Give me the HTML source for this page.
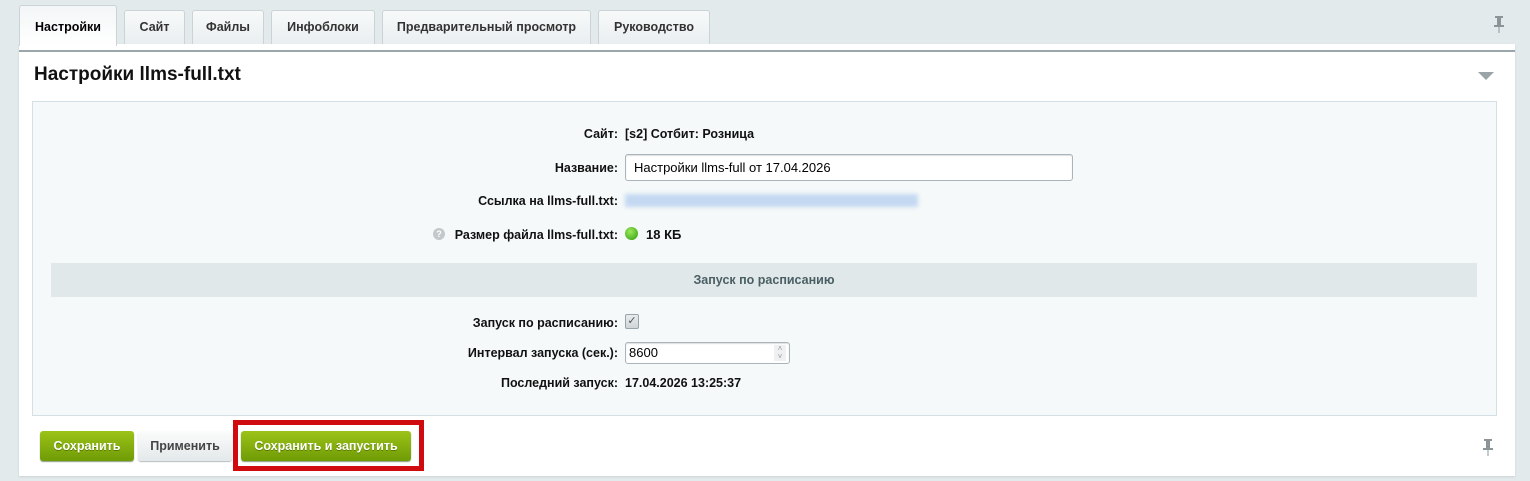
<!DOCTYPE html>
<html><head><meta charset="utf-8"><style>
*{box-sizing:border-box;margin:0;padding:0}
body{width:1530px;height:481px;background:#e3eaec;font-family:"Liberation Sans",Arial,sans-serif;position:relative;overflow:hidden;color:#000}
.tab{position:absolute;top:10px;height:34px;border:1px solid #cbd3d6;border-bottom:none;border-radius:3px 3px 0 0;background:linear-gradient(#f8fafa,#e9eef0);font-size:12.5px;font-weight:bold;color:#333;text-align:center;line-height:33px}
.tab.a{top:5px;height:41px;background:linear-gradient(#f3f6f7,#ffffff);color:#000;line-height:42px;z-index:3}
.panel{position:absolute;left:19px;top:44px;width:1496px;height:432px;background:#fff;border-top:6px solid #fff;box-shadow:0 1px 2px #c9d2d5}
.panel:before{content:"";position:absolute;left:0;right:0;top:0;height:2px;background:#9aa6a9}
.title{position:absolute;left:34px;top:64px;font-size:19px;font-weight:bold;color:#111}
.inner{position:absolute;left:32px;top:101px;width:1465px;height:315px;background:#f5f9f9;border:1px solid #d5e0e6}
.lbl{position:absolute;right:912px;font-size:12.5px;font-weight:bold;color:#111;white-space:nowrap}
.val{position:absolute;left:625px;font-size:12.5px;font-weight:bold;color:#111;white-space:nowrap}
.inp{position:absolute;left:625px;border:1px solid #a9b5ba;border-radius:3px;background:#fff;font-size:13px;padding-left:8px;box-shadow:inset 0 1px 1px #ddd}
.sec{position:absolute;left:51px;top:263px;width:1426px;height:34px;background:#e0e8ea;text-align:center;line-height:34px;font-size:12.5px;font-weight:bold;color:#4a5f64}
.btn{position:absolute;top:431px;height:30px;border-radius:3px;font-size:12.5px;font-weight:bold;text-align:center;line-height:30px}
.g{background:linear-gradient(#9cc319,#6f9b05);color:#fff;box-shadow:0 1px 1px #8a9a80;text-shadow:0 1px 0 #5a7a00}
</style></head><body>
<div class="panel"></div>
<div class="tab a" style="left:19px;width:98px">Настройки</div>
<div class="tab" style="left:124px;width:61px">Сайт</div>
<div class="tab" style="left:192px;width:72px">Файлы</div>
<div class="tab" style="left:271px;width:104px">Инфоблоки</div>
<div class="tab" style="left:382px;width:209px">Предварительный просмотр</div>
<div class="tab" style="left:598px;width:112px">Руководство</div>
<svg style="position:absolute;left:1492px;top:16px" width="14" height="18"><rect x="3" y="0" width="8" height="2" fill="#8b9598"/><rect x="5" y="2" width="4" height="7" fill="#8b9598"/><rect x="2" y="9" width="10" height="2" fill="#8b9598"/><rect x="6.5" y="11" width="1" height="6" fill="#8b9598"/></svg>
<div class="title">Настройки llms-full.txt</div>
<svg style="position:absolute;left:1478px;top:72px" width="18" height="9"><path d="M0 0H16L8 8Z" fill="#9aa3a6"/></svg>
<div class="inner"></div>
<div class="lbl" style="top:127px">Сайт:</div><div class="val" style="top:127px">[s2] Сотбит: Розница</div>
<div class="lbl" style="top:161px">Название:</div>
<div class="inp" style="top:154px;width:448px;height:27px;line-height:25px">Настройки llms-full от 17.04.2026</div>
<div class="lbl" style="top:194px">Ссылка на llms-full.txt:</div>
<div style="position:absolute;left:625px;top:194px;width:293px;height:13px;background:#c4d8f2;filter:blur(2px)"></div>
<div style="position:absolute;left:433px;top:228px;width:12px;height:12px;border-radius:50%;background:#c4c8ca;color:#fff;font-size:9px;font-weight:bold;text-align:center;line-height:12px">?</div>
<div class="lbl" style="top:228px">Размер файла llms-full.txt:</div>
<div style="position:absolute;left:625px;top:227px;width:13px;height:13px;border-radius:50%;background:radial-gradient(circle at 40% 35%,#9be85a,#2e9d0c)"></div>
<div class="val" style="left:646px;top:227px;font-size:13px">18 КБ</div>
<div class="sec">Запуск по расписанию</div>
<div class="lbl" style="top:316px">Запуск по расписанию:</div>
<div style="position:absolute;left:625px;top:314px;width:14px;height:15px;border:1px solid #99a4a8;border-radius:2px;background:linear-gradient(#e8ecee,#cfd5d8);font-size:11px;line-height:13px;text-align:center;color:#555">✓</div>
<div class="lbl" style="top:346px">Интервал запуска (сек.):</div>
<div class="inp" style="top:342px;width:165px;height:22px;line-height:20px;padding-left:3px">8600<span style="position:absolute;right:3px;top:2px;width:12px;height:16px;background:#eef0f1;font-size:8px;line-height:8px;color:#999;text-align:center">˄<br>˅</span></div>
<div class="lbl" style="top:376px">Последний запуск:</div><div class="val" style="top:376px">17.04.2026 13:25:37</div>
<div class="btn g" style="left:40px;width:94px">Сохранить</div>
<div class="btn" style="left:138px;width:94px;background:linear-gradient(#fbfcfc,#e3e8ea);color:#444;box-shadow:0 1px 1px #b5bec1">Применить</div>
<div class="btn g" style="left:241px;width:170px">Сохранить и запустить</div>
<div style="position:absolute;left:233px;top:420px;width:191px;height:51px;border:5px solid #cf0b10"></div>
<svg style="position:absolute;left:1481px;top:439px" width="14" height="18"><rect x="3" y="0" width="8" height="2" fill="#8b9598"/><rect x="5" y="2" width="4" height="7" fill="#8b9598"/><rect x="2" y="9" width="10" height="2" fill="#8b9598"/><rect x="6.5" y="11" width="1" height="6" fill="#8b9598"/></svg>
</body></html>
